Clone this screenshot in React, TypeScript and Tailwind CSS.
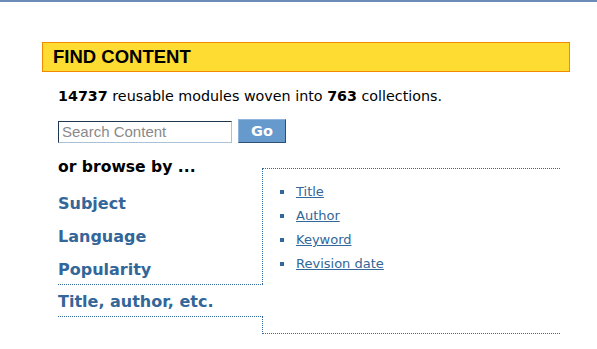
const verdana = { fontFamily: '"DejaVu Sans", Verdana, sans-serif' };

const browseLinks = ['Title', 'Author', 'Keyword', 'Revision date'];

export default function App() {
  return (
    <div className="min-h-[349px] w-[597px] bg-white" style={verdana}>
      <div className="h-[2px] w-full bg-[#6b8cb8]" />

      <div className="ml-[42px] mt-[40px] w-[528px]">
        {/* heading bar */}
        <div className="h-[30px] border border-[#f28a00] bg-[#fedc32] pl-[10px]">
          <h2 className="font-['Liberation_Sans',Arial,sans-serif] text-[18.5px] font-bold leading-[28px] text-black">
            FIND CONTENT
          </h2>
        </div>

        <div className="pl-4">
          <p className="mt-[14px] text-[14.3px] leading-[20px] text-black">
            <strong>14737</strong> reusable modules woven into <strong>763</strong> collections.
          </p>

          <form className="mt-[13px] flex items-end gap-[6px]" onSubmit={(e) => e.preventDefault()}>
            <input
              type="text"
              placeholder="Search Content"
              className="h-[22px] w-[174px] border border-b-[#a9c1d9] border-l-[#203750] border-r-[#a9c1d9] border-t-[#203750] px-[3px] font-['Liberation_Sans',Arial,sans-serif] text-[15px] text-black outline-none placeholder:text-[#8a8a8a]"
            />
            <button
              type="submit"
              className="h-[24px] w-[48px] border border-b-[#2d4e75] border-l-[#8fb3dc] border-r-[#2d4e75] border-t-[#8fb3dc] bg-[#6699cc] text-[14.5px] font-bold leading-[20px] text-white"
            >
              Go
            </button>
          </form>

          {/* browse tabs */}
          <div className="mt-[13px] flex">
            <div className="w-[204px]">
              <h3 className="text-[15.6px] font-bold leading-[22px] text-black">or browse by ...</h3>
              <ul className="mt-[9px] text-[16px] font-bold text-[#336699]">
                <li className="h-[33px] leading-[33px]">Subject</li>
                <li className="h-[33px] leading-[33px]">Language</li>
                <li className="h-[31px] leading-[33px]">Popularity</li>
                <li className="relative z-10 -mr-px h-[33px] w-[205px] border-y border-dotted border-[#336699] bg-white pt-[2px] leading-[29px]">
                  Title, author, etc.
                </li>
              </ul>
            </div>

            <div className="mt-[12px] h-[166px] w-[298px] border-y border-l border-dotted border-[#336699]">
              <ul className="pl-[17px] pt-[11px] text-[13px] leading-[24px]">
                {browseLinks.map((label) => (
                  <li key={label} className="flex items-center gap-[12px]">
                    <span className="h-[4px] w-[4px] bg-[#336699]" />
                    <a href="#" className="text-[#336699] underline">
                      {label}
                    </a>
                  </li>
                ))}
              </ul>
            </div>
          </div>
        </div>
      </div>
    </div>
  );
}
